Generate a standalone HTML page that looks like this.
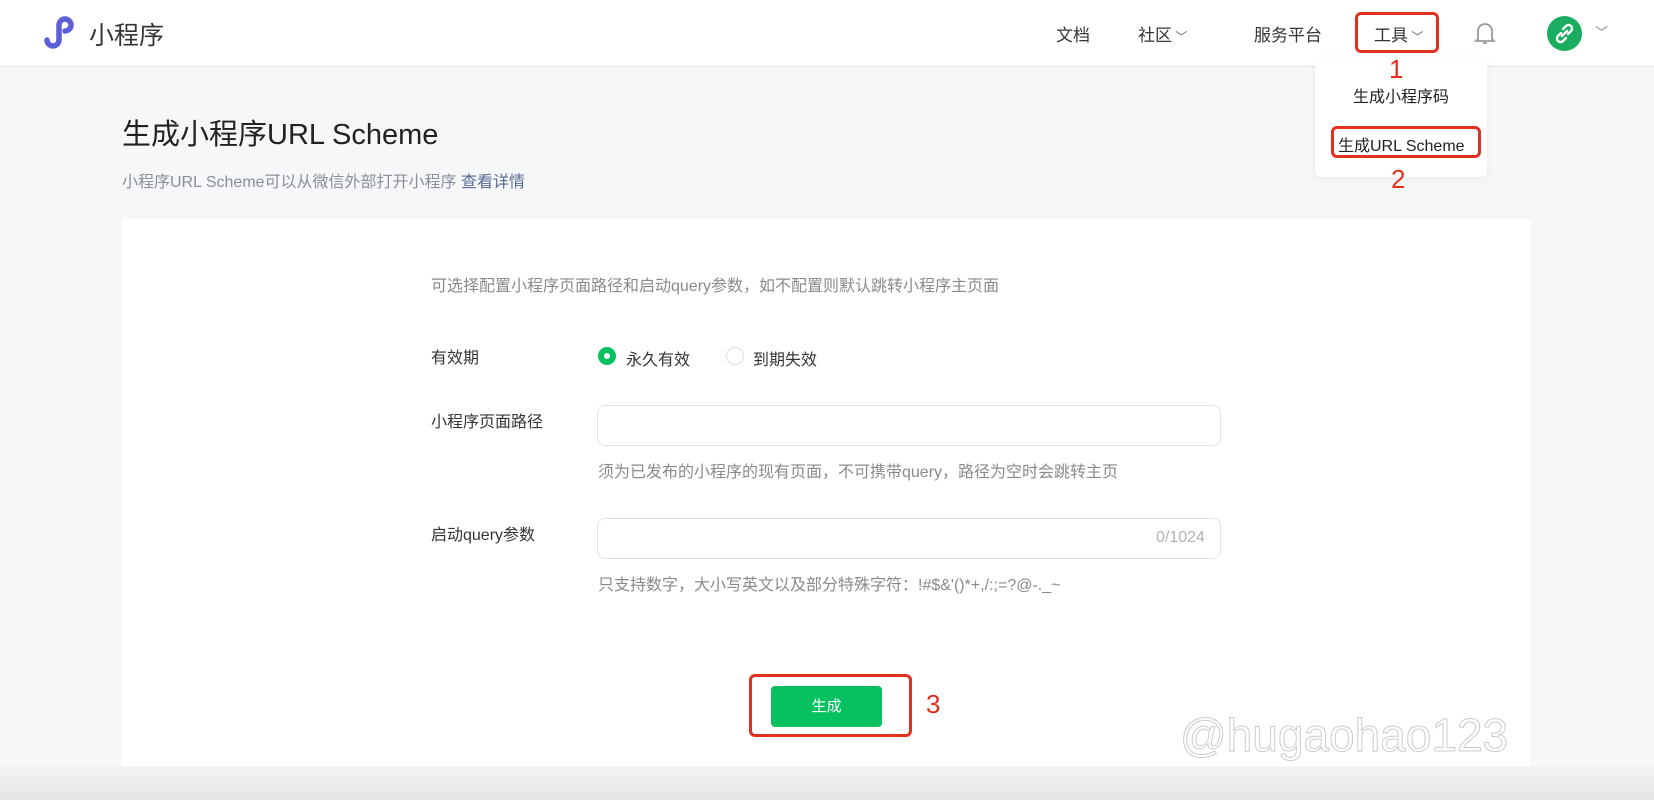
<!DOCTYPE html>
<html><head><meta charset="utf-8"><style>
*{margin:0;padding:0;box-sizing:border-box}
body{width:1654px;height:800px;overflow:hidden;background:#f6f7f9;font-family:"Liberation Sans","Noto Sans CJK SC",sans-serif;position:relative;color:#353535}
.abs{position:absolute;white-space:nowrap}
.hdr{position:absolute;left:0;top:0;width:1654px;height:67px;background:#fff;border-bottom:1px solid #e6e7ea}
.nav{font-size:17px;color:#353535;top:21px}
.red{position:absolute;border:3px solid #e0301e;border-radius:6px}
.num{color:#e0301e;font-size:26px}
.card{position:absolute;left:122px;top:219px;width:1409px;height:547px;background:#fff}
.lbl{font-size:16px;color:#353535}
.hint{font-size:16px;color:#8a8a8a}
.inp{position:absolute;border:1px solid #e2e2e2;border-radius:8px;background:#fff}
</style></head><body>
<div class="hdr"></div>
<svg class="abs" style="left:42px;top:14px" width="38" height="36" viewBox="0 0 38 36"><path d="M5 26a6 6 0 1 0 12 0V11a6 6 0 1 1 6 6" fill="none" stroke="#5d5fd9" stroke-width="5.5" stroke-linecap="round"/></svg>
<div class="abs" style="left:89px;top:16px;font-size:25px;color:#353535">小程序</div>
<div class="abs nav" style="left:1056px">文档</div>
<div class="abs nav" style="left:1138px">社区<span style="font-size:12px;color:#666"> ﹀</span></div>
<div class="abs nav" style="left:1254px">服务平台</div>
<div class="abs nav" style="left:1374px">工具<span style="font-size:12px;color:#666"> ﹀</span></div>
<div class="red" style="left:1355px;top:12px;width:84px;height:41px"></div>
<svg class="abs" style="left:1474px;top:20px" width="22" height="26" viewBox="0 0 22 26"><path d="M4 19V11a7 7 0 0 1 14 0v8l2 2H2z M9 23h4" fill="none" stroke="#999" stroke-width="1.8"/></svg>
<div class="abs" style="left:1547px;top:16px;width:35px;height:35px;border-radius:50%;background:#1aad5f"></div>
<svg class="abs" style="left:1554px;top:23px" width="21" height="21" viewBox="0 0 21 21"><path d="M9 6l3-3a3.5 3.5 0 0 1 5 5l-3 3M12 15l-3 3a3.5 3.5 0 0 1-5-5l3-3M8 13l5-5" fill="none" stroke="#fff" stroke-width="2.4" stroke-linecap="round"/></svg>
<div class="abs" style="left:1595px;top:22px;font-size:13px;color:#888">﹀</div>
<div class="abs" style="left:1315px;top:57px;width:172px;height:120px;background:#fff;border-radius:6px;box-shadow:0 2px 8px rgba(0,0,0,.06)"></div>
<div class="abs num" style="left:1389px;top:54px">1</div>
<div class="abs" style="left:1353px;top:83px;font-size:16px;color:#222">生成小程序码</div>
<div class="abs" style="left:1338px;top:132px;font-size:16px;color:#222">生成URL Scheme</div>
<div class="red" style="left:1331px;top:126px;width:150px;height:32px"></div>
<div class="abs num" style="left:1391px;top:164px">2</div>
<div class="abs" style="left:122px;top:111px;font-size:29px;color:#222">生成小程序URL Scheme</div>
<div class="abs" style="left:122px;top:168px;font-size:16px;color:#8a8f99">小程序URL Scheme可以从微信外部打开小程序 <span style="color:#576b95">查看详情</span></div>
<div class="card"></div>
<div class="abs hint" style="left:431px;top:272px">可选择配置小程序页面路径和启动query参数，如不配置则默认跳转小程序主页面</div>
<div class="abs lbl" style="left:431px;top:344px">有效期</div>
<div class="abs" style="left:598px;top:347px;width:18px;height:18px;border-radius:50%;background:#07c160"></div>
<div class="abs" style="left:604px;top:353px;width:6px;height:6px;border-radius:50%;background:#fff"></div>
<div class="abs lbl" style="left:626px;top:346px">永久有效</div>
<div class="abs" style="left:726px;top:347px;width:18px;height:18px;border-radius:50%;border:1px solid #ddd"></div>
<div class="abs lbl" style="left:753px;top:346px">到期失效</div>
<div class="abs lbl" style="left:431px;top:408px">小程序页面路径</div>
<div class="inp" style="left:597px;top:405px;width:624px;height:41px"></div>
<div class="abs hint" style="left:598px;top:458px">须为已发布的小程序的现有页面，不可携带query，路径为空时会跳转主页</div>
<div class="abs lbl" style="left:431px;top:521px">启动query参数</div>
<div class="inp" style="left:597px;top:518px;width:624px;height:41px"></div>
<div class="abs" style="left:1156px;top:529px;font-size:16px;color:#b2b2b2">0/1024</div>
<div class="abs hint" style="left:598px;top:571px">只支持数字，大小写英文以及部分特殊字符：!#$&amp;'()*+,/:;=?@-._~</div>
<div class="abs" style="left:771px;top:686px;width:111px;height:41px;background:#07c160;border-radius:4px;color:#fff;font-size:15px;text-align:center;line-height:41px">生成</div>
<div class="red" style="left:749px;top:674px;width:163px;height:63px"></div>
<div class="abs num" style="left:926px;top:689px">3</div>
<div class="abs" style="left:1180px;top:708px;font-size:46px;color:transparent;-webkit-text-stroke:1px #ccc">@hugaohao123</div>
<div class="abs" style="left:0;top:766px;width:1654px;height:34px;background:linear-gradient(#f3f4f6,#e3e4e6)"></div>
</body></html>
